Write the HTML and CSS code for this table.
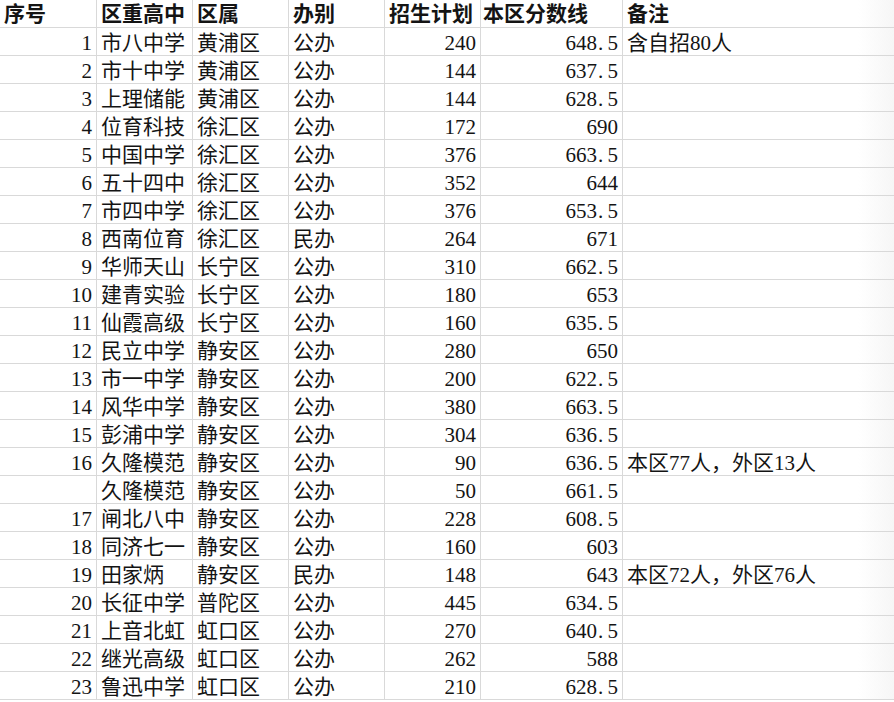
FILE: index.html
```html
<!DOCTYPE html>
<html lang="zh-CN">
<head>
<meta charset="utf-8">
<title>区重高中招生</title>
<link rel="stylesheet" href="styles.css">
</head>
<body>
<div class="sheet">
  <div class="c h">序号</div><div class="c h">区重高中</div><div class="c h">区属</div><div class="c h">办别</div><div class="c h">招生计划</div><div class="c h ov">本区分数线</div><div class="c h last">备注</div>

  <div class="c r">1</div><div class="c">市八中学</div><div class="c">黄浦区</div><div class="c">公办</div><div class="c r">240</div><div class="c r">648<span class="dot">.</span>5</div><div class="c last">含自招80人</div>
  <div class="c r">2</div><div class="c">市十中学</div><div class="c">黄浦区</div><div class="c">公办</div><div class="c r">144</div><div class="c r">637<span class="dot">.</span>5</div><div class="c last"></div>
  <div class="c r">3</div><div class="c">上理储能</div><div class="c">黄浦区</div><div class="c">公办</div><div class="c r">144</div><div class="c r">628<span class="dot">.</span>5</div><div class="c last"></div>
  <div class="c r">4</div><div class="c">位育科技</div><div class="c">徐汇区</div><div class="c">公办</div><div class="c r">172</div><div class="c r">690</div><div class="c last"></div>
  <div class="c r">5</div><div class="c">中国中学</div><div class="c">徐汇区</div><div class="c">公办</div><div class="c r">376</div><div class="c r">663<span class="dot">.</span>5</div><div class="c last"></div>
  <div class="c r">6</div><div class="c">五十四中</div><div class="c">徐汇区</div><div class="c">公办</div><div class="c r">352</div><div class="c r">644</div><div class="c last"></div>
  <div class="c r">7</div><div class="c">市四中学</div><div class="c">徐汇区</div><div class="c">公办</div><div class="c r">376</div><div class="c r">653<span class="dot">.</span>5</div><div class="c last"></div>
  <div class="c r">8</div><div class="c">西南位育</div><div class="c">徐汇区</div><div class="c">民办</div><div class="c r">264</div><div class="c r">671</div><div class="c last"></div>
  <div class="c r">9</div><div class="c">华师天山</div><div class="c">长宁区</div><div class="c">公办</div><div class="c r">310</div><div class="c r">662<span class="dot">.</span>5</div><div class="c last"></div>
  <div class="c r">10</div><div class="c">建青实验</div><div class="c">长宁区</div><div class="c">公办</div><div class="c r">180</div><div class="c r">653</div><div class="c last"></div>
  <div class="c r">11</div><div class="c">仙霞高级</div><div class="c">长宁区</div><div class="c">公办</div><div class="c r">160</div><div class="c r">635<span class="dot">.</span>5</div><div class="c last"></div>
  <div class="c r">12</div><div class="c">民立中学</div><div class="c">静安区</div><div class="c">公办</div><div class="c r">280</div><div class="c r">650</div><div class="c last"></div>
  <div class="c r">13</div><div class="c">市一中学</div><div class="c">静安区</div><div class="c">公办</div><div class="c r">200</div><div class="c r">622<span class="dot">.</span>5</div><div class="c last"></div>
  <div class="c r">14</div><div class="c">风华中学</div><div class="c">静安区</div><div class="c">公办</div><div class="c r">380</div><div class="c r">663<span class="dot">.</span>5</div><div class="c last"></div>
  <div class="c r">15</div><div class="c">彭浦中学</div><div class="c">静安区</div><div class="c">公办</div><div class="c r">304</div><div class="c r">636<span class="dot">.</span>5</div><div class="c last"></div>
  <div class="c r">16</div><div class="c">久隆模范</div><div class="c">静安区</div><div class="c">公办</div><div class="c r">90</div><div class="c r">636<span class="dot">.</span>5</div><div class="c last">本区77人，外区13人</div>
  <div class="c r"></div><div class="c">久隆模范</div><div class="c">静安区</div><div class="c">公办</div><div class="c r">50</div><div class="c r">661<span class="dot">.</span>5</div><div class="c last"></div>
  <div class="c r">17</div><div class="c">闸北八中</div><div class="c">静安区</div><div class="c">公办</div><div class="c r">228</div><div class="c r">608<span class="dot">.</span>5</div><div class="c last"></div>
  <div class="c r">18</div><div class="c">同济七一</div><div class="c">静安区</div><div class="c">公办</div><div class="c r">160</div><div class="c r">603</div><div class="c last"></div>
  <div class="c r">19</div><div class="c">田家炳</div><div class="c">静安区</div><div class="c">民办</div><div class="c r">148</div><div class="c r">643</div><div class="c last">本区72人，外区76人</div>
  <div class="c r">20</div><div class="c">长征中学</div><div class="c">普陀区</div><div class="c">公办</div><div class="c r">445</div><div class="c r">634<span class="dot">.</span>5</div><div class="c last"></div>
  <div class="c r">21</div><div class="c">上音北虹</div><div class="c">虹口区</div><div class="c">公办</div><div class="c r">270</div><div class="c r">640<span class="dot">.</span>5</div><div class="c last"></div>
  <div class="c r">22</div><div class="c">继光高级</div><div class="c">虹口区</div><div class="c">公办</div><div class="c r">262</div><div class="c r">588</div><div class="c last"></div>
  <div class="c r">23</div><div class="c">鲁迅中学</div><div class="c">虹口区</div><div class="c">公办</div><div class="c r">210</div><div class="c r">628<span class="dot">.</span>5</div><div class="c last"></div>
</div>
</body>
</html>
```

FILE: styles.css
```css
html, body {
  margin: 0;
  padding: 0;
  background: #ffffff;
}

body {
  width: 894px;
  height: 702px;
  overflow: hidden;
}

.sheet {
  display: grid;
  grid-template-columns: 97px 96px 96px 96px 96px 142px 1fr;
  grid-template-rows: 28px;
  grid-auto-rows: 28px;
  font-family: "Liberation Serif", "Noto Sans CJK SC", serif;
  font-size: 21px;
  color: #141414;
  background: linear-gradient(to right, #ffffff 96%, #f6f6f6 100%);
}

.c {
  box-sizing: border-box;
  border-right: 1px solid #d9d9d9;
  border-bottom: 1px solid #d9d9d9;
  padding: 4px 4px 0;
  line-height: 23px;
  white-space: nowrap;
  overflow: visible;
}

.c.last {
  border-right: none;
}

.h {
  font-weight: bold;
  padding-top: 2px;
  line-height: 25px;
}

.h.ov {
  padding-left: 2px;
  position: relative;
  z-index: 1;
}

.r {
  text-align: right;
}

.dot {
  display: inline-block;
  width: 10.5px;
  padding-left: 1px;
  box-sizing: border-box;
  text-align: left;
}
```
